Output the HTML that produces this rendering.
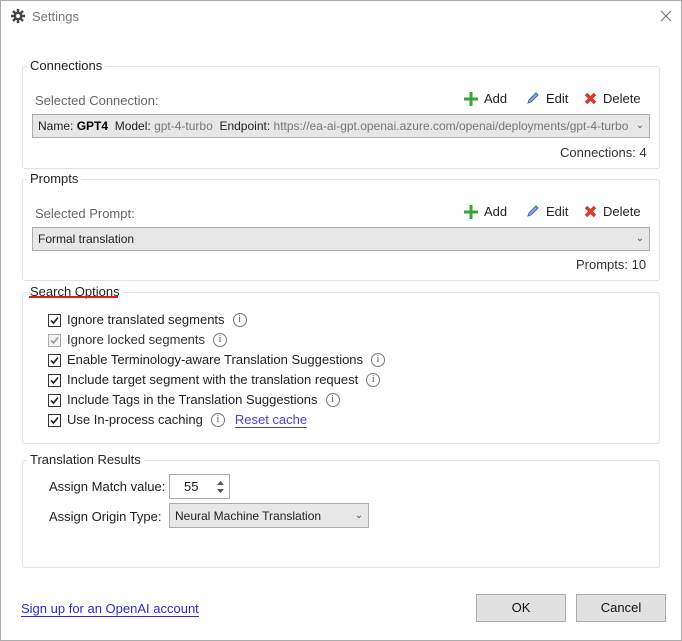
<!DOCTYPE html>
<html><head><meta charset="utf-8"><style>
*{box-sizing:border-box;margin:0;padding:0}
body{width:682px;height:641px;background:#fff;font-family:"Liberation Sans","Noto Sans CJK SC",sans-serif;font-size:13px;color:#222;position:relative;overflow:hidden}
.a{position:absolute;white-space:nowrap}
.g{position:absolute;border:1px solid #dde3ea;border-radius:3px}
.gt{position:absolute;background:#fff;padding:0 3px;top:-9px;left:4px;line-height:16px;color:#222}
.sel{position:absolute;background:#e7e7e7;border:1px solid #adadad;height:24px;font-size:12px;line-height:22px;padding-left:5px;color:#333;font-family:"Liberation Sans",Arial,sans-serif;overflow:hidden;white-space:nowrap}
.sel .ar{position:absolute;right:0;top:0;width:18px;text-align:center;font-size:10px;color:#555;background:#e7e7e7}
.cb{position:absolute;width:13px;height:13px;border:1px solid #333;background:#fff;left:48px}
.cb svg{position:absolute;left:0;top:0}
.lbl{position:absolute;left:67px;white-space:nowrap;line-height:16px;height:16px}
.inf{display:inline-block;width:14px;height:14px;border:1px solid #777;border-radius:50%;font-size:10px;line-height:12px;text-align:center;color:#555;font-family:"Liberation Serif",serif;vertical-align:top;margin-top:1px;margin-left:8px}
.btn{position:absolute;background:#e1e1e1;border:1px solid #adadad;text-align:center;line-height:26px;top:594px;height:28px;width:90px;color:#111}
.tb{position:absolute;white-space:nowrap;color:#222}
</style></head><body>
<div class="a" style="left:0;top:0;width:682px;height:641px;border:1px solid #aaa"></div>
<svg class="a" style="left:11px;top:9px" width="14" height="14" viewBox="0 0 14 14"><g stroke="#444" stroke-width="2.5"><line x1="7" y1="0" x2="7" y2="14"/><line x1="0" y1="7" x2="14" y2="7"/><line x1="2" y1="2" x2="12" y2="12"/><line x1="12" y1="2" x2="2" y2="12"/></g><circle cx="7" cy="7" r="4.3" fill="#444"/><circle cx="7" cy="7" r="2" fill="#fff"/></svg>
<div class="a" style="left:32px;top:9px;color:#777">Settings</div>
<svg class="a" style="left:660px;top:10px" width="12" height="12"><path d="M1 1L11 11M11 1L1 11" stroke="#777" stroke-width="1.2"/></svg>

<div class="g" style="left:22px;top:66px;width:638px;height:103px"><div class="gt">Connections</div></div>
<div class="a" style="left:35px;top:93px;color:#666">Selected Connection:</div>
<svg class="a" style="left:463px;top:91px" width="16" height="16"><path d="M8 1V15M1 8H15" stroke="#3aa53a" stroke-width="3"/></svg>
<div class="tb" style="left:484px;top:91px">Add</div>
<svg class="a" style="left:526px;top:91px" width="14" height="14"><path d="M2 12L3 9L10 2L12 4L5 11Z" fill="#8fb0e0" stroke="#3a64b0" stroke-width="1"/></svg>
<div class="tb" style="left:546px;top:91px">Edit</div>
<svg class="a" style="left:584px;top:92px" width="13" height="13"><path d="M2 2L11 11M11 2L2 11" stroke="#d63b30" stroke-width="3.5"/></svg>
<div class="tb" style="left:603px;top:91px">Delete</div>
<div class="sel" style="left:32px;top:114px;width:618px"><span style="color:#222">Name: </span><b style="color:#000">GPT4</b>&nbsp; <span style="color:#222">Model:</span> <span style="color:#777">gpt-4-turbo</span>&nbsp; <span style="color:#222">Endpoint:</span> <span style="color:#777">https://ea-ai-gpt.openai.azure.com/openai/deployments/gpt-4-turbo</span><span class="ar">⌄</span></div>
<div class="a" style="left:560px;top:145px;color:#333">Connections: 4</div>

<div class="g" style="left:22px;top:179px;width:638px;height:102px"><div class="gt">Prompts</div></div>
<div class="a" style="left:35px;top:206px;color:#666">Selected Prompt:</div>
<svg class="a" style="left:463px;top:204px" width="16" height="16"><path d="M8 1V15M1 8H15" stroke="#3aa53a" stroke-width="3"/></svg>
<div class="tb" style="left:484px;top:204px">Add</div>
<svg class="a" style="left:526px;top:204px" width="14" height="14"><path d="M2 12L3 9L10 2L12 4L5 11Z" fill="#8fb0e0" stroke="#3a64b0" stroke-width="1"/></svg>
<div class="tb" style="left:546px;top:204px">Edit</div>
<svg class="a" style="left:584px;top:205px" width="13" height="13"><path d="M2 2L11 11M11 2L2 11" stroke="#d63b30" stroke-width="3.5"/></svg>
<div class="tb" style="left:603px;top:204px">Delete</div>
<div class="sel" style="left:32px;top:227px;width:618px;color:#222">Formal translation<span class="ar">⌄</span></div>
<div class="a" style="left:576px;top:257px;color:#333">Prompts: 10</div>

<div class="g" style="left:22px;top:292px;width:638px;height:152px"><div class="gt">Search Options</div></div>
<div class="a" style="left:29px;top:296px;width:89px;height:2px;background:#e21b1b"></div>

<div class="cb" style="top:314px"><svg width="11" height="11"><path d="M2 5.5L4.5 8L9 2.5" fill="none" stroke="#222" stroke-width="1.6"/></svg></div>
<div class="lbl" style="top:312px">Ignore translated segments<span class="inf">i</span></div>
<div class="cb" style="top:334px;border-color:#aaa;background:#f2f2f2"><svg width="11" height="11"><path d="M2 5.5L4.5 8L9 2.5" fill="none" stroke="#999" stroke-width="1.6"/></svg></div>
<div class="lbl" style="top:332px;color:#333">Ignore locked segments<span class="inf">i</span></div>
<div class="cb" style="top:354px"><svg width="11" height="11"><path d="M2 5.5L4.5 8L9 2.5" fill="none" stroke="#222" stroke-width="1.6"/></svg></div>
<div class="lbl" style="top:352px">Enable Terminology-aware Translation Suggestions<span class="inf">i</span></div>
<div class="cb" style="top:374px"><svg width="11" height="11"><path d="M2 5.5L4.5 8L9 2.5" fill="none" stroke="#222" stroke-width="1.6"/></svg></div>
<div class="lbl" style="top:372px">Include target segment with the translation request<span class="inf">i</span></div>
<div class="cb" style="top:394px"><svg width="11" height="11"><path d="M2 5.5L4.5 8L9 2.5" fill="none" stroke="#222" stroke-width="1.6"/></svg></div>
<div class="lbl" style="top:392px">Include Tags in the Translation Suggestions<span class="inf">i</span></div>
<div class="cb" style="top:414px"><svg width="11" height="11"><path d="M2 5.5L4.5 8L9 2.5" fill="none" stroke="#222" stroke-width="1.6"/></svg></div>
<div class="lbl" style="top:412px">Use In-process caching<span class="inf">i</span><span style="margin-left:10px;color:#4a3fd0;border-bottom:1px solid #4a3fd0">Reset cache</span></div>

<div class="g" style="left:22px;top:460px;width:638px;height:108px"><div class="gt">Translation Results</div></div>
<div class="a" style="left:49px;top:479px">Assign Match value:</div>
<div class="a" style="left:169px;top:474px;width:61px;height:25px;border:1px solid #aaa;background:#fff"><span style="position:absolute;left:14px;top:4px">55</span><svg style="position:absolute;right:4px;top:5px" width="9" height="14"><path d="M1 5L4.5 1L8 5ZM1 9L4.5 13L8 9Z" fill="#555"/></svg></div>
<div class="a" style="left:49px;top:509px">Assign Origin Type:</div>
<div class="sel" style="left:169px;top:503px;width:200px;height:25px;line-height:24px;color:#222">Neural Machine Translation<span class="ar">⌄</span></div>

<div class="a" style="left:21px;top:601px;color:#2a2ad0;border-bottom:1px solid #2a2ad0;line-height:15px">Sign up for an OpenAI account</div>
<div class="btn" style="left:476px">OK</div>
<div class="btn" style="left:576px">Cancel</div>
</body></html>
